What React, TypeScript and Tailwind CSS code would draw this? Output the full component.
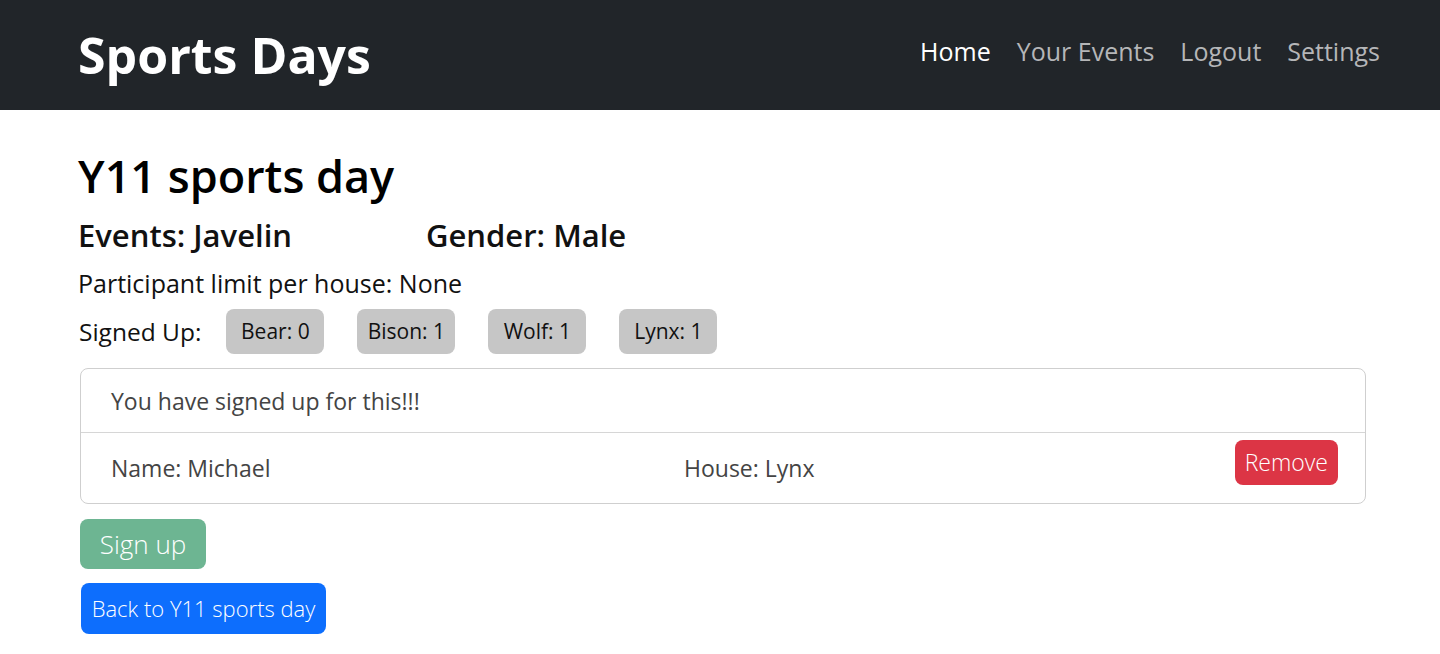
import React from "react";

const houses = [
  { name: "Bear", count: 0 },
  { name: "Bison", count: 1 },
  { name: "Wolf", count: 1 },
  { name: "Lynx", count: 1 },
];

export default function App() {
  return (
    <div className="min-h-screen bg-white font-['Open_Sans',sans-serif] text-[#111]">
      <header className="flex h-[110px] items-center justify-between bg-[#212529] pl-[78px] pr-[60px]">
        <h1 className="text-[50px] font-bold leading-none text-white">Sports Days</h1>

        <nav className="-mt-[6px] flex gap-[26px] text-[25px]">
          <a className="text-white">Home</a>
          <a className="text-[#b5b6b8]">Your Events</a>
          <a className="text-[#b5b6b8]">Logout</a>
          <a className="text-[#b5b6b8]">Settings</a>
        </nav>
      </header>

      <main className="pl-[78px] pr-[74px] pt-[38px]">
        <h2 className="text-[45px] font-semibold leading-tight text-black">Y11 sports day</h2>

        <div className="mt-[12px] flex text-[31px] font-semibold leading-tight">
          <span className="w-[348px]">Events: Javelin</span>
          <span>Gender: Male</span>
        </div>

        <p className="mt-[11px] text-[25px] leading-snug">Participant limit per house: None</p>

        <div className="mt-[9px] flex items-center">
          <span className="ml-[1px] mr-[25px] text-[24.5px]">Signed Up:</span>
          <div className="flex gap-[33px]">
            {houses.map((house) => (
              <span
                key={house.name}
                className="flex h-[45px] w-[98px] items-center justify-center rounded-lg bg-[#c6c6c6] text-[21px]"
              >
                {house.name}: {house.count}
              </span>
            ))}
          </div>
        </div>

        <section className="ml-[2px] mt-[14px] w-[1286px] rounded-lg border border-[#cfcfcf] text-[23px] text-[#444]">
          <div className="flex h-[64px] items-center border-b border-[#d6d6d6] px-[30px]">
            You have signed up for this!!!
          </div>
          <div className="flex h-[70px] items-center pl-[30px] pr-[27px]">
            <span className="w-[573px]">Name: Michael</span>
            <span className="flex-1">House: Lynx</span>
            <button
              type="button"
              className="-mt-[12px] rounded-lg bg-[#dc3545] px-[10px] py-[5px] text-[23px] font-light text-white"
            >
              Remove
            </button>
          </div>
        </section>

        <button
          type="button"
          disabled
          className="ml-[2px] mt-[15px] block h-[50px] w-[126px] rounded-lg bg-[#6db592] text-[26px] font-light text-white"
        >
          Sign up
        </button>

        <button
          type="button"
          className="ml-[3px] mt-[14px] block h-[51px] w-[245px] rounded-lg bg-[#0d6efd] text-[22px] font-light text-white"
        >
          Back to Y11 sports day
        </button>
      </main>
    </div>
  );
}
